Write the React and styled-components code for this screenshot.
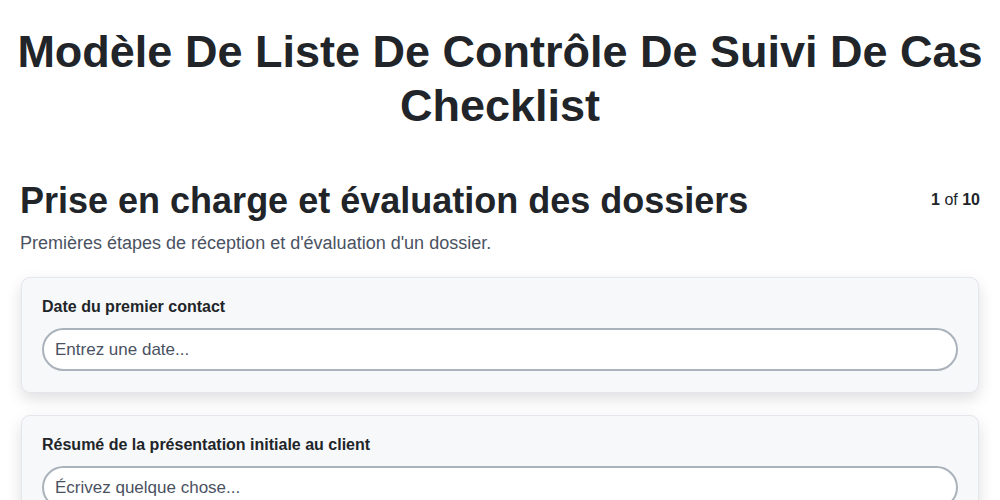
import React from "react";
import styled, { createGlobalStyle } from "styled-components";

const Global = createGlobalStyle`
  html, body { margin: 0; padding: 0; background: #ffffff; }
  body { font-family: "Liberation Sans", Arial, sans-serif; color: #212529; }
  * { box-sizing: border-box; }
`;

const Page = styled.div`
  padding: 25px 0 20px;
  display: flex;
  flex-direction: column;
`;

const Title = styled.h1`
  margin: 0 0 46px;
  font-size: 45px;
  line-height: 1.2;
  font-weight: 700;
  text-align: center;
  color: #212529;
`;

const Section = styled.section`
  padding: 0 20px;
  display: flex;
  flex-direction: column;
`;

const SectionHeader = styled.div`
  display: flex;
  justify-content: space-between;
  align-items: flex-start;
  gap: 16px;
`;

const SectionTitle = styled.h2`
  margin: 0;
  font-size: 36px;
  line-height: 1.2;
  font-weight: 700;
  color: #212529;
`;

const Counter = styled.div`
  font-size: 16px;
  line-height: 1.2;
  color: #212529;
  padding-top: 11px;
  white-space: nowrap;
  b { font-weight: 700; }
`;

const Subtitle = styled.p`
  margin: 8px 0 20px;
  font-size: 18px;
  line-height: 1.5;
  color: #4a5262;
`;

const Cards = styled.div`
  display: flex;
  flex-direction: column;
  gap: 22px;
  padding: 0 1px;
`;

const Card = styled.div`
  background: #f7f8fa;
  border: 1px solid #e4e6ec;
  border-radius: 9px;
  padding: 20px 20px 21px;
  box-shadow: 0 6px 16px rgba(0, 0, 0, 0.13);
  display: flex;
  flex-direction: column;
  gap: 12px;
`;

const Label = styled.label`
  font-size: 16px;
  line-height: 18px;
  font-weight: 700;
  color: #212529;
`;

const Input = styled.input`
  height: 43px;
  width: 100%;
  border: 2px solid #aab2bb;
  border-radius: 22px;
  background: #ffffff;
  padding: 0 11px;
  font-family: "Liberation Sans", Arial, sans-serif;
  font-size: 17px;
  color: #212529;
  outline: none;
  &::placeholder { color: #4a5262; opacity: 1; }
`;

const fields = [
  { label: "Date du premier contact", placeholder: "Entrez une date..." },
  { label: "Résumé de la présentation initiale au client", placeholder: "Écrivez quelque chose..." },
];

export default function App() {
  return (
    <>
      <Global />
      <Page>
        <Title>Modèle De Liste De Contrôle De Suivi De Cas Checklist</Title>
        <Section>
          <SectionHeader>
            <SectionTitle>Prise en charge et évaluation des dossiers</SectionTitle>
            <Counter><b>1</b> of <b>10</b></Counter>
          </SectionHeader>
          <Subtitle>Premières étapes de réception et d'évaluation d'un dossier.</Subtitle>
          <Cards>
            {fields.map((f) => (
              <Card key={f.label}>
                <Label>{f.label}</Label>
                <Input placeholder={f.placeholder} />
              </Card>
            ))}
          </Cards>
        </Section>
      </Page>
    </>
  );
}
